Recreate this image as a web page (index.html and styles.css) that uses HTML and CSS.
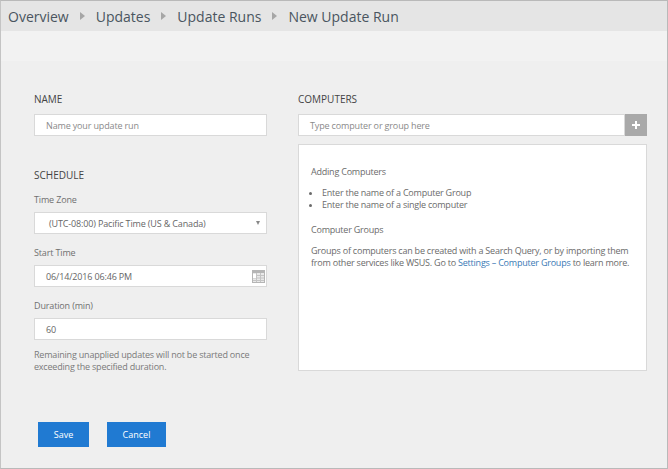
FILE: index.html
```html
<!DOCTYPE html>
<html>
<head>
<meta charset="utf-8"/>
<title>New Update Run</title>
<link rel="stylesheet" href="styles.css">
</head>
<body>
<div class="window">
  <div class="crumbs">
    <span>Overview</span><i class="arrow"></i>
    <span>Updates</span><i class="arrow"></i>
    <span>Update Runs</span><i class="arrow"></i>
    <span>New Update Run</span>
  </div>
  <div class="band"></div>
  <div class="form">
    <div class="col-left">
      <h4>NAME</h4>
      <div class="field placeholder">Name your update run</div>
      <h4 class="schedule">SCHEDULE</h4>
      <label class="first">Time Zone</label>
      <div class="field select">
        <span>(UTC-08:00) Pacific Time (US &amp; Canada)</span>
        <i class="caret"></i>
      </div>
      <label>Start Time</label>
      <div class="field date">
        <span>06/14/2016 06:46 PM</span>
        <svg width="13" height="13" viewBox="0 0 13 13">
          <rect width="13" height="13" fill="#b5b5b5"/>
          <rect x="1" y="3" width="11" height="9" fill="#e9e9e9"/>
          <path d="M1 5.5h11M1 8h11M1 10.500h11M4.500 3v9M8.500 3v9" stroke="#c4c4c4" stroke-width="1" fill="none"/>
          <rect x="1" y="4" width="3" height="4" fill="#fff"/>
        </svg>
      </div>
      <label>Duration (min)</label>
      <div class="field date"><span>60</span></div>
      <p class="hint">Remaining unapplied updates will not be started once exceeding the specified duration.</p>
    </div>
    <div class="col-right">
      <h4>COMPUTERS</h4>
      <div class="add-row">
        <div class="field placeholder">Type computer or group here</div>
        <div class="plus">
          <svg width="8" height="8" viewBox="0 0 8 8"><path d="M3 0h2v3h3v2H5v3H3V5H0V3h3z" fill="#fff"/></svg>
        </div>
      </div>
      <div class="panel">
        <p>Adding Computers</p>
        <ul>
          <li>Enter the name of a Computer Group</li>
          <li>Enter the name of a single computer</li>
        </ul>
        <p>Computer Groups</p>
        <p>Groups of computers can be created with a Search Query, or by importing them from other services like WSUS. Go to <a>Settings – Computer Groups</a> to learn more.</p>
      </div>
    </div>
  </div>
  <div class="buttons">
    <button class="save">Save</button>
    <button class="cancel">Cancel</button>
  </div>
</div>
</body>
</html>
```

FILE: styles.css
```css
html, body {
  margin: 0;
  padding: 0;
}

body {
  font-family: "Open Sans", "Noto Sans", sans-serif;
  font-size: 9px;
  letter-spacing: -0.15px;
  color: #6b6b6b;
}

.window {
  box-sizing: border-box;
  width: 668px;
  height: 469px;
  background-color: #efefef;
  border-top: 1px solid #b9b9b9;
  border-left: 1px solid #c4c4c4;
  border-right: 1px solid #b9b9b9;
  border-bottom: 1px solid #b9b9b9;
}

.crumbs {
  display: flex;
  align-items: center;
  height: 30px;
  padding-left: 7px;
  background-color: #e5e5e5;
  color: #4a5560;
  font-size: 14px;
  letter-spacing: 0;
}

.arrow {
  width: 0;
  height: 0;
  margin: 0 11px 0 11px;
  border-left: 5px solid #a6a6a6;
  border-top: 4.5px solid transparent;
  border-bottom: 4.5px solid transparent;
}

.band {
  height: 30px;
  background-color: #f2f2f2;
}

.form {
  display: flex;
  padding: 31px 19px 0 33px;
}

.col-left {
  width: 233px;
  margin-right: 31px;
}

.col-right {
  width: 349px;
}

h4 {
  margin: 0 0 7px;
  height: 15px;
  line-height: 15px;
  font-size: 10px;
  font-weight: 400;
  letter-spacing: 0;
  color: #444;
}

h4.schedule {
  margin-top: 32px;
  margin-bottom: 0;
}

label {
  display: block;
  height: 13px;
  line-height: 13px;
  margin: 12px 0 6px;
  font-size: 9px;
  color: #707070;
}

label.first {
  margin-top: 10px;
}

.field {
  box-sizing: border-box;
  display: flex;
  align-items: center;
  justify-content: space-between;
  height: 22px;
  background-color: #fff;
  border: 1px solid #d9d9d9;
  padding: 0 1px 0 11px;
  color: #666;
}

.placeholder {
  color: #8a8a8a;
}

.select {
  padding-left: 14px;
  padding-right: 6px;
}

.caret {
  width: 0;
  height: 0;
  border-top: 4px solid #888;
  border-left: 2px solid transparent;
  border-right: 2px solid transparent;
}

.hint {
  margin: 9px 0 0;
  line-height: 12px;
  letter-spacing: -0.2px;
  color: #7a7a7a;
}

.add-row {
  display: flex;
  margin-bottom: 8px;
}

.add-row .field {
  flex: 1;
}

.plus {
  display: flex;
  align-items: center;
  justify-content: center;
  width: 22px;
  height: 22px;
  background-color: #a9a9a9;
}

.panel {
  box-sizing: border-box;
  height: 227px;
  padding: 21px 8px 0 12px;
  background-color: #fff;
  border: 1px solid #d9d9d9;
  color: #6b6b6b;
  line-height: 12px;
  letter-spacing: -0.22px;
}

.panel p {
  margin: 0 0 9px;
}

.panel ul {
  margin: 0 0 13px;
  padding-left: 11px;
}

.panel a {
  color: #3a7ab5;
}

.buttons {
  display: flex;
  gap: 18px;
  padding: 49px 0 0 37px;
}

button {
  height: 25px;
  padding: 0;
  border: none;
  background-color: #207ad2;
  color: #fff;
  font-family: inherit;
  font-size: 9px;
}

.save {
  width: 51px;
}

.cancel {
  width: 59px;
}
```
